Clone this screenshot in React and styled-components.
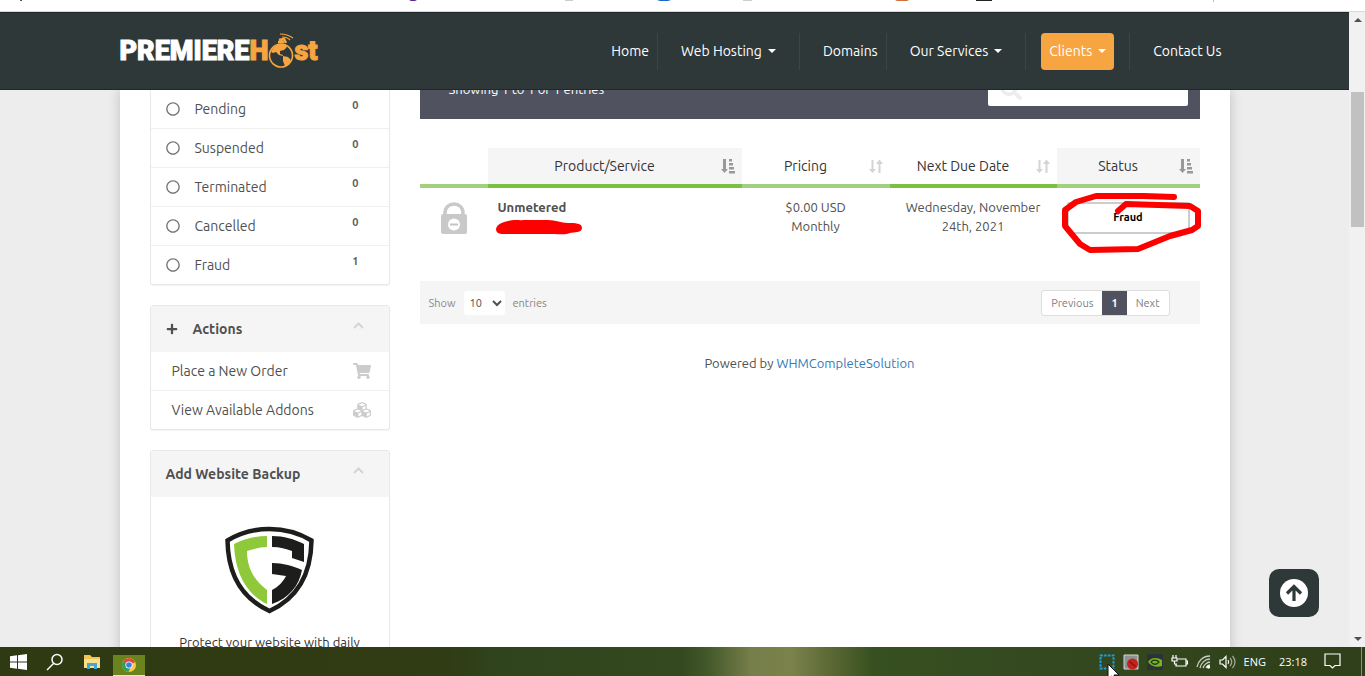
import React from 'react';
import styled, { createGlobalStyle } from 'styled-components';
import { FaCubes, FaPlus, FaRegCircle, FaSearch, FaShoppingCart } from 'react-icons/fa';

const NAV = [
  { name: 'Home' },
  { name: 'Web Hosting', menu: true },
  { name: 'Domains' },
  { name: 'Our Services', menu: true },
  { name: 'Clients', menu: true, active: true },
  { name: 'Contact Us' },
];

const STATUSES = [
  { name: 'Pending', count: 0 },
  { name: 'Suspended', count: 0 },
  { name: 'Terminated', count: 0 },
  { name: 'Cancelled', count: 0 },
  { name: 'Fraud', count: 1 },
];

const COLUMNS = [
  { name: 'Product/Service', sorted: true },
  { name: 'Pricing', width: 148 },
  { name: 'Next Due Date', width: 167 },
  { name: 'Status', width: 143, sorted: true },
];

const App = () => (
  <Screen>
    <GlobalStyle />
    <BrowserEdge>
      <TabRemnants />
    </BrowserEdge>
    <Viewport>
      <Page>
        <Header />
        <Scroller>
          <Container>
            <Sidebar />
            <Services />
          </Container>
        </Scroller>
        <TopButton aria-label="Back to top">
          <svg width="28" height="28" viewBox="0 0 28 28">
            <circle cx="14" cy="14" r="14" fill="#fff" />
            <path d="M14 22V8M7 14.500l7-7 7 7" fill="none" stroke="#2f3839" strokeWidth="3.200" />
          </svg>
        </TopButton>
      </Page>
      <Scrollbar>
        <Arrow />
        <Thumb />
        <Arrow $down />
      </Scrollbar>
    </Viewport>
    <Taskbar />
  </Screen>
);

const TabRemnants = () => (
  <svg width="1365" height="3" viewBox="0 0 1365 3">
    <path d="M20 0h2v1h-2z" fill="#555" />
    <path d="M409 0h8l-2 1h-4z" fill="#5c2d91" />
    <path d="M565 0h8v1h-8zM743 0h9v1h-9z" fill="#ccc" />
    <path d="M657 0h14l-3 1h-8z" fill="#1b66c9" />
    <path d="M895 0h14l-2 1h-10z" fill="#d2703c" />
    <path d="M976 0h16v1h-16z" fill="#222" />
    <path d="M1213 0h1v2h-1z" fill="#bbb" />
  </svg>
);

const Header = () => (
  <Header__Bar>
    <Header__Inner>
      <Logo href="#">
        <span>PREMIERE</span>
        <Logo__Accent>H</Logo__Accent>
        <Globe />
        <Logo__Accent>st</Logo__Accent>
      </Logo>
      <Nav>
        {NAV.map((item) => (
          <Nav__Item key={item.name} $menu={item.menu}>
            <Nav__Link href="#" $active={item.active}>
              {item.name}
              {item.menu && <Caret />}
            </Nav__Link>
          </Nav__Item>
        ))}
      </Nav>
    </Header__Inner>
  </Header__Bar>
);

const Globe = () => (
  <svg width="26" height="36" viewBox="0 0 26 36">
    <g fill="none" stroke="#f7a541">
      <circle cx="13" cy="22.500" r="11.500" strokeWidth="1.600" />
      <path d="M10 9l6 0M11 7l5-1 2 4" strokeWidth="2.500" />
      <path d="M12 1c4 0 10 2 13 4M14 4c4 0 6 1 8 3" strokeWidth="1.200" />
    </g>
    <path
      d="M5 15l5-4 7 0 2 3-3 3-4 1 0 3 3 1 0 1-4-1-3-3-3 1-2-1zM15 23l5 1 3 3-3 5-3 1-2-5z"
      fill="#f7a541"
    />
  </svg>
);

const Chevron = () => (
  <svg width="11" height="7" viewBox="0 0 11 7">
    <path d="M1 6l4.500-4.500 4.500 4.500" fill="none" stroke="#d4d4d4" strokeWidth="2" />
  </svg>
);

const Sidebar = () => (
  <Sidebar__Column>
    <Card $continued>
      {STATUSES.map((status) => (
        <Card__Row key={status.name} href="#">
          <FaRegCircle size={14} />
          <Card__Label $indent>{status.name}</Card__Label>
          <Count>{status.count}</Count>
        </Card__Row>
      ))}
    </Card>
    <Card>
      <Card__Header>
        <FaPlus size={12} />
        <Card__Title $indent>Actions</Card__Title>
        <Toggle aria-label="Collapse Actions">
          <Chevron />
        </Toggle>
      </Card__Header>
      <Card__Row href="#" $action>
        <Card__Label>Place a New Order</Card__Label>
        <FaShoppingCart size={18} />
      </Card__Row>
      <Card__Row href="#" $action>
        <Card__Label>View Available Addons</Card__Label>
        <FaCubes size={18} />
      </Card__Row>
    </Card>
    <Card>
      <Card__Header>
        <Card__Title>Add Website Backup</Card__Title>
        <Toggle aria-label="Collapse Add Website Backup">
          <Chevron />
        </Toggle>
      </Card__Header>
      <Promo>
        <Shield />
        <p>Protect your website with daily</p>
      </Promo>
    </Card>
  </Sidebar__Column>
);

const Shield = () => (
  <svg width="90" height="88" viewBox="0 0 90 88">
    <path
      d="M44.500 3C30 3 15 7 2.500 14.500 3 48 16 72 44.500 85 73 72 86 48 86.500 14.500 74 7 59 3 44.500 3z"
      fill="#fff"
      stroke="#1d1d1b"
      strokeWidth="4.500"
    />
    <path d="M42 10v11c-7 0-14 2-20 4 0 17 7 29 20 39v14C20 67 10 46 9 18c10-5 21-8 33-8z" fill="#8fc93a" />
    <path d="M47 10c12 0 22 3 32 8v18l-12-4v-7c-6-2-12-4-20-4z" fill="#1d1d1b" />
    <path d="M47 37c11 0 21 3 30 7-3 16-13 28-30 34V64c6-3 11-8 14-14l-14-2z" fill="#1d1d1b" />
  </svg>
);

const SortIcon = ({ sorted }) => (
  <svg width="14" height="16" viewBox="0 0 14 16">
    {sorted ? (
      <path
        d="M2 1h3v10h2L3.500 15 0 11h2zM8 1h3v2.500H8zM8 5h4v2.500H8zM8 9h5v2.500H8zM8 13h6v2.500H8z"
        fill="#999"
      />
    ) : (
      <path d="M2.500 2h2v9h2.500L3.500 15 0 11h2.500zM9.500 15h2V6H14L10.500 1.500 7 6h2.500z" fill="#d4d4d4" />
    )}
  </svg>
);

const Services = () => (
  <Main>
    <InfoBar>
      <span>Showing 1 to 1 of 1 entries</span>
      <Search>
        <FaSearch size={22} />
        <input type="text" aria-label="Search" />
      </Search>
    </InfoBar>
    <Table>
      <colgroup>
        <Col $width={68} />
        {COLUMNS.map((column) => (
          <Col key={column.name} $width={column.width} />
        ))}
      </colgroup>
      <thead>
        <tr>
          <Th aria-label="Security" />
          {COLUMNS.map((column) => (
            <Th key={column.name} $sorted={column.sorted}>
              <SortButton>
                <span>{column.name}</span>
                <SortIcon sorted={column.sorted} />
              </SortButton>
            </Th>
          ))}
        </tr>
      </thead>
      <tbody>
        <tr>
          <Td>
            <Padlock />
          </Td>
          <Td $left>
            <strong>Unmetered</strong>
            <Redaction viewBox="0 0 86 16">
              <path
                d="M0 10c1-5 7-7 12-8 8-2 12 0 15-1h25c8 0 13 3 20 3 7 0 14 0 14 5 0 5-8 4-12 5-4 2-10 1-18 1H8c-6 0-8-2-8-5z"
                fill="#fd0000"
              />
            </Redaction>
          </Td>
          <Td>
            $0.00 USD
            <br />
            Monthly
          </Td>
          <Td>Wednesday, November 24th, 2021</Td>
          <Td>
            <Status>Fraud</Status>
            <Scribble viewBox="0 0 140 62">
              <path
                d="M56 18l8-7 64 2 8 5v15l-6 4-22 6-32 13-48 1-10-6-15-18V17l11-8 20-6h47l31 1"
                fill="none"
                stroke="#fd0000"
                strokeWidth="6"
                strokeLinecap="round"
                strokeLinejoin="round"
              />
            </Scribble>
          </Td>
        </tr>
      </tbody>
    </Table>
    <TableFooter>
      <Length>
        Show
        <select defaultValue="10">
          <option>10</option>
          <option>25</option>
          <option>50</option>
        </select>
        entries
      </Length>
      <Pager aria-label="Pages">
        <Pager__Button>Previous</Pager__Button>
        <Pager__Button $current>1</Pager__Button>
        <Pager__Button>Next</Pager__Button>
      </Pager>
    </TableFooter>
    <Powered>
      Powered by <a href="#">WHMCompleteSolution</a>
    </Powered>
  </Main>
);

const Padlock = () => (
  <svg width="26" height="33" viewBox="0 0 26 33">
    <path d="M4 15v-3C4 0 22 0 22 12v3" fill="none" stroke="#c9c9c9" strokeWidth="3.500" />
    <rect y="13" width="26" height="20" rx="2" fill="#c9c9c9" />
    <circle cx="13" cy="23.500" r="6" fill="#fff" />
    <path d="M9 23.500h8" stroke="#c4c4c4" strokeWidth="2" />
  </svg>
);

const Taskbar = () => (
  <Taskbar__Bar>
    <Taskbar__Apps>
      <Task aria-label="Start">
        <svg width="17" height="16" viewBox="0 0 17 16" fill="#fff">
          <path d="M0 2.300L7 1.300V7.500H0zM8 1.200L17 0v7.500H8zM0 8.500h7v6.200L0 13.700zM8 8.500h9V16l-9-1.200z" />
        </svg>
      </Task>
      <Task aria-label="Search">
        <svg width="18" height="18" viewBox="0 0 18 18" fill="none" stroke="#fff" strokeWidth="1.500">
          <circle cx="11" cy="6.500" r="5" />
          <path d="M7.500 10.500L1 17" />
        </svg>
      </Task>
      <Task aria-label="File Explorer">
        <svg width="18" height="16" viewBox="0 0 18 16">
          <path d="M1 1h6l2 2h8v11H1z" fill="#f3c556" />
          <path d="M1 5h16v9H1z" fill="#fbdf8c" />
          <path d="M4 15V9h10v6h-3v-3H7v3z" fill="#3fa7dc" />
        </svg>
      </Task>
      <Task aria-label="Chrome" $active>
        <svg width="16" height="16" viewBox="0 0 16 16">
          <circle cx="8" cy="8" r="7" fill="#f7c948" />
          <path d="M8 8L2 4.500A7 7 0 0 1 14.200 5z" fill="#dd4b3e" />
          <path d="M8 8L2 4.500A7 7 0 0 0 7.500 15L10 9z" fill="#2d9f58" />
          <circle cx="8" cy="8" r="3.600" fill="#fff" />
          <circle cx="8" cy="8" r="2.800" fill="#3f7de8" />
        </svg>
      </Task>
    </Taskbar__Apps>
    <Tray>
      <Tray__Snip>
        <svg width="16" height="16" viewBox="0 0 16 16">
          <rect x="1.500" y="1.500" width="13" height="13" fill="none" stroke="#1a9fe0" strokeWidth="2" strokeDasharray="2.500 1.200" />
        </svg>
        <Cursor viewBox="0 0 12 18">
          <path d="M1 0v15l3.500-3L7 18l2.500-1L7 11h5z" fill="#fff" stroke="#111" strokeWidth="1" />
        </Cursor>
      </Tray__Snip>
      <svg width="16" height="16" viewBox="0 0 16 16">
        <path d="M1 1h14v14H1z" fill="#8e9296" stroke="#d5d5d5" />
        <circle cx="9.500" cy="10" r="5.500" fill="#c5221c" />
        <path d="M6.500 7.500l6 5" stroke="#8b1010" strokeWidth="1.500" />
      </svg>
      <svg width="16" height="16" viewBox="0 0 16 16">
        <rect width="16" height="16" rx="1" fill="#2b3338" />
        <path d="M1 8c3-5 9-5 14-2v6c-6 2-11 0-14-4z" fill="#78b51c" />
        <path d="M4 8c2-3 6-2 8 0-2 3-6 3-8 0z" fill="none" stroke="#20331a" strokeWidth="1.300" />
      </svg>
      <svg width="17" height="14" viewBox="0 0 17 14" fill="none" stroke="#fff" strokeWidth="1.200">
        <path d="M7 4h8v7H5V9M15 6h1.500v3H15M2 0v3M5 0v3M1 3h5v3H1zM3.500 6v3H6" />
      </svg>
      <svg width="15" height="15" viewBox="0 0 15 15" fill="none" stroke="#ccd0c4" strokeWidth="1.300">
        <path d="M1 13C2 7 7 2 14 2M4 14c1-5 5-9 10-9M7 14c1-3 4-6 7-6M10 14c1-2 2-3 4-3" />
        <circle cx="12.500" cy="13" r="1" fill="#fff" stroke="#fff" />
      </svg>
      <svg width="17" height="14" viewBox="0 0 17 14" fill="none" stroke="#fff" strokeWidth="1.200">
        <path d="M1 5h2.500L7 1.500v11L3.500 9H1zM9 5q1.500 2 0 4" />
        <path d="M11 3q3.500 4 0 8M13.500 1q5 6 0 12" stroke="#a2ac95" />
      </svg>
      <span>ENG</span>
      <time>23:18</time>
      <svg width="17" height="17" viewBox="0 0 17 17" fill="none" stroke="#fff" strokeWidth="1.200">
        <path d="M1 1h15v11.500h-5L8.500 15 6 12.500H1z" />
      </svg>
    </Tray>
  </Taskbar__Bar>
);

export default App;

const GlobalStyle = createGlobalStyle`
  * {
    box-sizing: border-box;
  }

  body {
    margin: 0;
    overflow: hidden;
    font-family: Ubuntu, 'Noto Sans', sans-serif;
    font-size: 13px;
    color: #505050;
  }

  button, select, input {
    font: inherit;
    color: inherit;
  }

  button {
    padding: 0;
    border: 0;
    background: none;
    cursor: pointer;
  }

  svg {
    display: block;
    flex: none;
  }

  p {
    margin: 0;
  }

  a {
    color: #337ab7;
    text-decoration: none;
  }
`;

const Screen = styled.div`
  height: 100vh;
  display: flex;
  flex-direction: column;
`;

const BrowserEdge = styled.div`
  flex: none;
  height: 12px;
  overflow: hidden;
  background: #fff;
  border-bottom: 1px solid #d4d9dc;
`;

const Viewport = styled.div`
  flex: 1;
  min-height: 0;
  display: flex;
`;

const Page = styled.div`
  position: relative;
  flex: 1;
  min-width: 0;
  display: flex;
  flex-direction: column;
  background: #ededed;
`;

const Scroller = styled.div`
  flex: 1;
  min-height: 0;
  overflow: hidden;
`;

const Container = styled.div`
  max-width: 1110px;
  min-height: 100%;
  margin: 0 auto;
  padding: 0 30px;
  display: flex;
  align-items: flex-start;
  gap: 30px;
  background: #fff;
  box-shadow: 0 0 12px rgba(0, 0, 0, 0.2);
`;

const Header__Bar = styled.header`
  flex: none;
  height: 78px;
  background: #2f3839;
  border-top: 1px solid #22292c;
  border-bottom: 1px solid #22262c;
`;

const Header__Inner = styled.div`
  max-width: 1110px;
  height: 100%;
  margin: 0 auto;
  display: flex;
  align-items: center;
  justify-content: space-between;
`;

const Logo = styled.a`
  display: flex;
  align-items: center;
  color: #fff;
  font-family: Roboto, sans-serif;
  font-size: 27px;
  font-weight: 900;
  line-height: 36px;
  -webkit-text-stroke: 1px;
`;

const Logo__Accent = styled.span`
  color: #f7a541;
`;

const Nav = styled.nav`
  display: flex;
`;

const Nav__Item = styled.div`
  padding: 0 ${({ $menu }) => ($menu ? '15px' : '0')} 0 15px;
  border-right: 1px solid #3c4647;

  &:last-child {
    border-right: 0;
  }
`;

const Nav__Link = styled.a`
  height: 37px;
  padding: 0 8px;
  display: flex;
  align-items: center;
  gap: 6px;
  border-radius: 4px;
  background: ${({ $active }) => ($active ? '#f7a541' : 'transparent')};
  color: #fff;
  font-size: 14px;
  white-space: nowrap;
`;

const Caret = styled.i`
  border: 4px solid transparent;
  border-top-color: #fff;
  border-bottom: 0;
`;

const Sidebar__Column = styled.aside`
  flex: none;
  width: 240px;
  display: flex;
  flex-direction: column;
  gap: 20px;
`;

const Card = styled.section`
  background: #fff;
  border: 1px solid #e8e8e8;
  border-top-width: ${({ $continued }) => ($continued ? '0' : '1px')};
  border-radius: ${({ $continued }) => ($continued ? '0 0 3px 3px' : '3px')};
  box-shadow: 0 1px 1px rgba(0, 0, 0, 0.05);
`;

const Card__Header = styled.div`
  height: 46px;
  padding: 0 25px 0 15px;
  display: flex;
  align-items: center;
  background: #f5f5f5;
`;

const Card__Title = styled.h3`
  flex: 1;
  margin: 0;
  padding-left: ${({ $indent }) => ($indent ? '15px' : '0')};
  font-size: 14px;
  font-weight: 700;
`;

const Toggle = styled.button`
  padding-bottom: 8px;
`;

const Card__Row = styled.a`
  height: 39px;
  padding: 0 ${({ $action }) => ($action ? '18px 0 21px' : '30px 0 15px')};
  display: flex;
  align-items: center;
  border-bottom: 1px solid #f0f0f0;
  color: ${({ $action }) => ($action ? '#ccc' : '#707070')};

  &:last-child {
    height: 38px;
    border-bottom: 0;
  }
`;

const Card__Label = styled.span`
  flex: 1;
  padding-left: ${({ $indent }) => ($indent ? '15px' : '0')};
  color: #505050;
  font-size: 14px;
`;

const Count = styled.span`
  padding-bottom: 8px;
  color: #606060;
  font-size: 11px;
  font-weight: 700;
`;

const Promo = styled.div`
  padding: 29px 15px;
  display: flex;
  flex-direction: column;
  align-items: center;
  gap: 18px;
  color: #333;
  line-height: 20px;
  white-space: nowrap;
`;

const Main = styled.main`
  flex: 1;
  min-width: 0;
`;

/* the bar is scrolled halfway under the header */
const InfoBar = styled.div`
  height: 60px;
  margin: -31px 0 29px;
  padding: 0 12px 0 29px;
  display: flex;
  align-items: center;
  justify-content: space-between;
  background: #50535f;
  color: #fff;
`;

const Search = styled.label`
  width: 200px;
  height: 34px;
  padding-left: 12px;
  display: flex;
  align-items: center;
  background: #fff;
  border-radius: 2px;
  color: #ededf0;

  input {
    flex: 1;
    min-width: 0;
    border: 0;
    outline: 0;
    background: none;
  }
`;

const Table = styled.table`
  width: 100%;
  margin-bottom: 35px;
  table-layout: fixed;
  border-collapse: separate;
  border-spacing: 0;
`;

const Col = styled.col`
  width: ${({ $width }) => ($width ? `${$width}px` : 'auto')};
`;

const Th = styled.th`
  height: 40px;
  padding: 0 7px 0 11px;
  background: ${({ $sorted }) => ($sorted ? '#f5f5f5' : '#fff')};
  border-bottom: 4px solid #a3d07e;
  color: #333;
  font-weight: 400;

  &:nth-child(even) {
    border-bottom-color: #7bc043;
  }
`;

const SortButton = styled.button`
  width: 100%;
  display: flex;
  align-items: center;
  gap: 10px;
  font-size: 14px;

  span {
    flex: 1;
    white-space: nowrap;
  }
`;

const Td = styled.td`
  position: relative;
  height: 58px;
  padding: 10px;
  text-align: ${({ $left }) => ($left ? 'left' : 'center')};
  vertical-align: top;
  line-height: 19px;

  & > svg {
    margin: 3px auto 0;
  }
`;

const Redaction = styled.svg`
  position: absolute;
  left: 8px;
  top: 28px;
  width: 86px;
  height: 16px;
`;

const Status = styled.span`
  height: 32px;
  margin-top: 4px;
  padding-bottom: 2px;
  display: flex;
  align-items: center;
  justify-content: center;
  border: 2px solid #ccc;
  border-radius: 2px;
  color: #000;
  font-size: 11px;
  font-weight: 700;
`;

const Scribble = styled.svg`
  position: absolute;
  left: 5px;
  top: 2px;
  width: 140px;
  height: 62px;
  overflow: visible;
`;

const TableFooter = styled.div`
  height: 43px;
  padding: 0 30px 0 9px;
  display: flex;
  align-items: center;
  justify-content: space-between;
  background: #f5f5f5;
  color: #888;
  font-size: 11px;
`;

const Length = styled.label`
  display: flex;
  align-items: center;
  gap: 8px;

  select {
    width: 41px;
    height: 24px;
    padding-left: 2px;
    border: 0;
    border-radius: 3px;
    background: #fff;
    color: #505050;
  }
`;

const Pager = styled.nav`
  display: flex;
  background: #fff;
  border: 1px solid #ddd;
  border-radius: 3px;
`;

const Pager__Button = styled.button`
  height: 24px;
  padding: 0 9px;
  background: ${({ $current }) => ($current ? '#50535f' : 'transparent')};
  color: ${({ $current }) => ($current ? '#fff' : '#808080')};
  font-weight: ${({ $current }) => ($current ? '700' : '400')};
`;

const Powered = styled.p`
  margin-top: 29px;
  line-height: 20px;
  text-align: center;
`;

const TopButton = styled.button`
  position: absolute;
  right: 30px;
  bottom: 30px;
  width: 50px;
  height: 48px;
  display: flex;
  align-items: center;
  justify-content: center;
  border-radius: 10px;
  background: #2f3839;
`;

const Scrollbar = styled.div`
  flex: none;
  width: 16px;
  padding: 6px 1px 6px 2px;
  display: flex;
  flex-direction: column;
  align-items: center;
  background: #f1f1f1;
`;

const Arrow = styled.i`
  margin-top: ${({ $down }) => ($down ? 'auto' : '0')};
  border: 4px solid transparent;
  border-top: ${({ $down }) => ($down ? '4px solid #505050' : '0')};
  border-bottom: ${({ $down }) => ($down ? '0' : '4px solid #505050')};
`;

const Thumb = styled.div`
  width: 100%;
  height: 135px;
  margin-top: 70px;
  background: #c1c1c1;
`;

const Taskbar__Bar = styled.footer`
  flex: none;
  height: 29px;
  display: flex;
  justify-content: space-between;
  background: linear-gradient(
    90deg,
    #303a12 0%,
    #303c14 33%,
    #2f431d 36%,
    #34491f 50%,
    #455a2a 52%,
    #767e4a 55%,
    #7b824b 58%,
    #596733 61%,
    #375020 64%,
    #354a20 74%,
    #2f3f19 100%
  );
  color: #fff;
  font-family: 'Open Sans', sans-serif;
  font-size: 11px;
`;

const Taskbar__Apps = styled.div`
  padding-left: 2px;
  display: flex;
  align-items: flex-end;
  gap: 5px;
`;

const Task = styled.button`
  width: 32px;
  height: ${({ $active }) => ($active ? '21px' : '29px')};
  display: flex;
  align-items: center;
  justify-content: center;
  background: ${({ $active }) => ($active ? '#6b831f' : 'transparent')};
  border-bottom: ${({ $active }) => ($active ? '1px solid #e4f58c' : '0')};
`;

const Tray = styled.div`
  margin-right: 3px;
  padding-right: 20px;
  display: flex;
  align-items: center;
  gap: 8px;
  border-right: 1px solid #8b947b;

  time {
    padding: 0 9px 0 5px;
  }
`;

const Tray__Snip = styled.span`
  position: relative;
`;

const Cursor = styled.svg`
  position: absolute;
  left: 8px;
  top: 10px;
  width: 12px;
  height: 18px;
`;
